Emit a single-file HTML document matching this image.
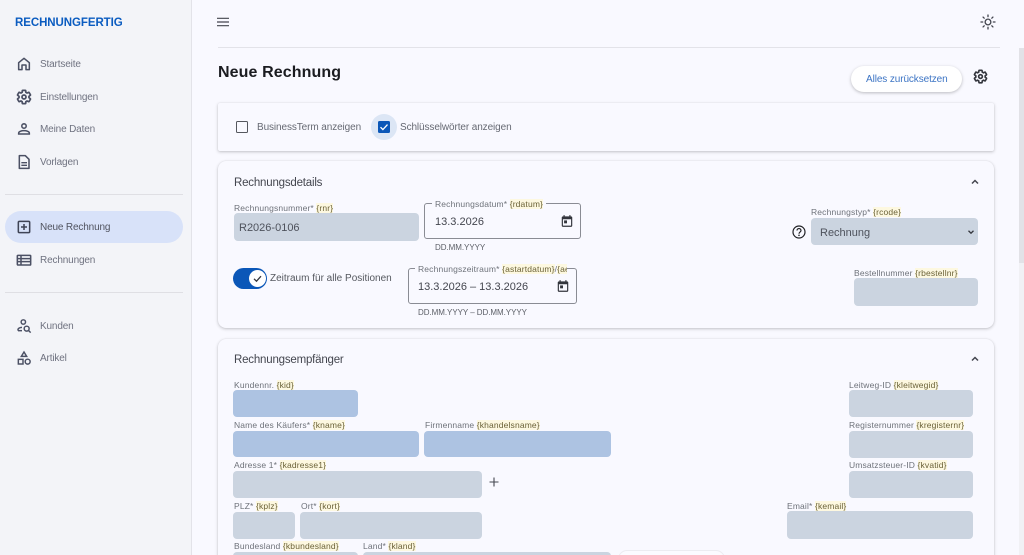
<!DOCTYPE html>
<html lang="de">
<head>
<meta charset="utf-8">
<title>Neue Rechnung</title>
<style>
html,body{margin:0;padding:0;width:1024px;height:555px;overflow:hidden;background:#f9f9ff;font-family:"Liberation Sans",sans-serif}
*{box-sizing:border-box}
#w{position:absolute;left:0;top:0;width:1024px;height:555px;overflow:hidden;background:#f9f9ff}
.a{position:absolute}
.t{position:absolute;white-space:nowrap;line-height:12px;height:12px}
.nav{font-size:10px;color:#6f7280;left:40px;letter-spacing:-.15px}
.lb{font-size:8.5px;color:#6e727a;letter-spacing:.15px}
.lb b{font-weight:400;background:#fdf8e0;color:#6b6238}
.in{position:absolute;background:#cbd4e0;border-radius:4px}
.bl{background:#adc3e2}
.card{position:absolute;left:218px;width:776px;background:#f9f9ff;box-shadow:0 1px 3px rgba(0,0,0,.22),0 0 1px rgba(0,0,0,.1)}
.h2{font-size:11.5px;color:#44464f;letter-spacing:-.2px}
.val{font-size:11px;color:#4e525c}
.out{position:absolute;border:1px solid #8a8c94;border-radius:3px}
.hlp{font-size:8px;color:#5d6068;letter-spacing:-.05px}
svg{position:absolute;overflow:visible}
</style>
</head>
<body>
<div id="w">
<svg width="0" height="0" style="position:absolute">
<symbol id="gear" viewBox="0 0 24 24"><path fill="none" stroke="currentColor" stroke-width="2.600" d="M19.43 12.98c.04-.32.07-.64.07-.98 0-.34-.03-.66-.07-.98l2.11-1.65c.19-.15.24-.42.12-.64l-2-3.46c-.12-.22-.39-.3-.61-.22l-2.49 1c-.52-.4-1.08-.73-1.69-.98l-.38-2.65C14.46 2.18 14.25 2 14 2h-4c-.25 0-.46.18-.49.42l-.38 2.65c-.61.25-1.17.59-1.69.98l-2.49-1c-.23-.09-.49 0-.61.22l-2 3.46c-.13.22-.07.49.12.64l2.11 1.65c-.04.32-.07.65-.07.98 0 .33.03.66.07.98l-2.11 1.65c-.19.15-.24.42-.12.64l2 3.46c.12.22.39.3.61.22l2.49-1c.52.4 1.08.73 1.69.98l.38 2.65c.03.24.24.42.49.42h4c.25 0 .46-.18.49-.42l.38-2.65c.61-.25 1.17-.59 1.69-.98l2.49 1c.23.09.49 0 .61-.22l2-3.46c.12-.22.07-.49-.12-.64z"/><circle cx="12" cy="12" r="3" fill="none" stroke="currentColor" stroke-width="2.600"/></symbol>
<symbol id="cal" viewBox="0 0 24 24"><path fill="currentColor" d="M19 4h-1V2h-2v2H8V2H6v2H5c-1.100 0-2 .9-2 2v14c0 1.100.9 2 2 2h14c1.100 0 2-.9 2-2V6c0-1.100-.9-2-2-2zm0 16H5V9h14v11z"/><rect x="7" y="11" width="5" height="5" fill="currentColor"/></symbol>
<symbol id="chev" viewBox="0 0 24 24"><path fill="none" stroke="currentColor" stroke-width="3" d="M6 15l6-6 6 6"/></symbol>
</svg>

<!-- sidebar -->
<div class="a" style="left:0;top:0;width:192px;height:555px;background:#f3f4f8;border-right:1px solid #e3e3e9"></div>
<div class="t" style="left:15px;top:17px;font-size:11.5px;font-weight:700;color:#0b5cc0;letter-spacing:-.07px">RECHNUNGFERTIG</div>
<div class="a" style="left:5px;top:211px;width:178px;height:32px;background:#d8e2f9;border-radius:16px"></div>
<div class="a" style="left:5px;top:194px;width:178px;height:1px;background:#dfdfe4"></div>
<div class="a" style="left:5px;top:292px;width:178px;height:1px;background:#dfdfe4"></div>

<div class="t nav" style="top:59px">Startseite</div>
<div class="t nav" style="top:92px">Einstellungen</div>
<div class="t nav" style="top:124px">Meine Daten</div>
<div class="t nav" style="top:157px">Vorlagen</div>
<div class="t nav" style="top:222px;color:#50535f">Neue Rechnung</div>
<div class="t nav" style="top:255px">Rechnungen</div>
<div class="t nav" style="top:321px">Kunden</div>
<div class="t nav" style="top:353px">Artikel</div>

<svg style="left:16px;top:56px;color:#4b5064" width="16" height="16" viewBox="0 0 24 24"><path fill="none" stroke="currentColor" stroke-width="2.300" stroke-linejoin="round" d="M4 20.500V10l8-6.500 8 6.500v10.500h-5v-7H9v7z"/></svg>
<svg style="left:16px;top:89px;color:#4b5064" width="16" height="16"><use href="#gear" width="16" height="16"/></svg>
<svg style="left:16px;top:121px;color:#4b5064" width="16" height="16" viewBox="0 0 24 24"><circle cx="12" cy="7.500" r="3.300" fill="none" stroke="currentColor" stroke-width="2.300"/><path fill="none" stroke="currentColor" stroke-width="2.300" d="M4 19.500v-1.500c0-2.200 4-3.500 8-3.500s8 1.300 8 3.500v1.500z"/></svg>
<svg style="left:16px;top:154px;color:#4b5064" width="16" height="16" viewBox="0 0 24 24"><path fill="none" stroke="currentColor" stroke-width="2.300" stroke-linejoin="round" d="M5 2.500h9l5.500 5.500v13.500H5z"/><path fill="none" stroke="currentColor" stroke-width="2" d="M8 13h8.500M8 17h8.500"/></svg>
<svg style="left:16px;top:219px;color:#3f4456" width="16" height="16" viewBox="0 0 24 24"><rect x="3.500" y="3.500" width="17" height="17" rx="1.500" fill="none" stroke="currentColor" stroke-width="2.300"/><path fill="none" stroke="currentColor" stroke-width="2.300" d="M12 7.500v9M7.500 12h9"/></svg>
<svg style="left:16px;top:252px;color:#4b5064" width="16" height="16" viewBox="0 0 24 24"><rect x="2" y="5" width="20" height="14.500" rx="1" fill="none" stroke="currentColor" stroke-width="2.300"/><path fill="none" stroke="currentColor" stroke-width="2.300" d="M2 10h20M2 14.500h20M7.500 5v14.500"/></svg>
<svg style="left:16px;top:318px;color:#4b5064" width="16" height="16" viewBox="0 0 24 24"><circle cx="11" cy="6" r="3.300" fill="none" stroke="currentColor" stroke-width="2.200"/><path fill="none" stroke="currentColor" stroke-width="2.200" d="M3 19v-1.500c0-2 3-3.500 6-3.500"/><path fill="none" stroke="currentColor" stroke-width="2.200" d="M3 19h6"/><circle cx="16" cy="16" r="3.700" fill="none" stroke="currentColor" stroke-width="2.200"/><path fill="none" stroke="currentColor" stroke-width="2.200" d="M19 19l3 3"/></svg>
<svg style="left:16px;top:350px;color:#4b5064" width="16" height="16" viewBox="0 0 24 24"><path fill="none" stroke="currentColor" stroke-width="2.200" d="M12 3l4 6.500H8z"/><rect x="3.500" y="14" width="7" height="7" fill="none" stroke="currentColor" stroke-width="2.200"/><circle cx="17.500" cy="17.500" r="3.700" fill="none" stroke="currentColor" stroke-width="2.200"/></svg>

<!-- top bar -->
<svg style="left:215px;top:14px;color:#44464f" width="16" height="16" viewBox="0 0 24 24"><path fill="none" stroke="currentColor" stroke-width="1.800" d="M3 6.500h18M3 12h18M3 17.500h18"/></svg>
<svg style="left:980px;top:14px;color:#44464f" width="16" height="16" viewBox="0 0 24 24"><circle cx="12" cy="12" r="4.300" fill="none" stroke="currentColor" stroke-width="2"/><path fill="none" stroke="currentColor" stroke-width="2" stroke-linecap="round" d="M12 1.500v2.500M12 20v2.500M1.500 12H4M20 12h2.500M4.600 4.600l1.700 1.700M17.700 17.700l1.700 1.700M4.600 19.400l1.700-1.700M17.700 6.300l1.700-1.700"/></svg>
<div class="a" style="left:218px;top:47px;width:782px;height:1px;background:#e3e3e9"></div>
<div class="a" style="left:1019px;top:48px;width:5px;height:507px;background:#f1f1f5"></div>
<div class="a" style="left:1019px;top:48px;width:5px;height:215px;background:#e2e2e7"></div>

<div class="t" style="left:218px;top:65px;height:16px;line-height:16px;font-size:16px;font-weight:700;color:#1b1c20;letter-spacing:.1px">Neue Rechnung</div>
<div class="a" style="left:851px;top:66px;width:111px;height:26px;background:#fff;border-radius:13px;box-shadow:0 1px 3px rgba(0,0,0,.25)"></div>
<div class="t" style="left:866px;top:74px;font-size:10px;color:#3c74c4;letter-spacing:-.1px">Alles zurücksetzen</div>
<svg style="left:973px;top:69px;color:#33353c" width="15" height="15"><use href="#gear" width="15" height="15"/></svg>

<!-- checkbox card -->
<div class="card" style="top:103px;height:48px;border-radius:2px"></div>
<div class="a" style="left:236px;top:121px;width:12px;height:12px;border:1.500px solid #55575e;border-radius:1.500px"></div>
<div class="t" style="left:257px;top:122px;font-size:10px;color:#666973;letter-spacing:-.1px">BusinessTerm anzeigen</div>
<div class="a" style="left:371px;top:114px;width:26px;height:26px;border-radius:50%;background:#dce6f5"></div>
<div class="a" style="left:378px;top:121px;width:12px;height:12px;background:#0b57b8;border-radius:1.500px"></div>
<svg style="left:378px;top:121px" width="12" height="12" viewBox="0 0 12 12"><path fill="none" stroke="#fff" stroke-width="1.300" d="M2.500 6.200l2.400 2.400 4.600-5"/></svg>
<div class="t" style="left:400px;top:122px;font-size:10px;color:#666973;letter-spacing:-.1px">Schlüsselwörter anzeigen</div>

<!-- Rechnungsdetails -->
<div class="card" style="top:161px;height:167px;border-radius:8px"></div>
<div class="t h2" style="left:234px;top:177px">Rechnungsdetails</div>
<svg style="left:969px;top:176px;color:#44464f" width="12" height="12"><use href="#chev" width="12" height="12"/></svg>

<div class="t lb" style="left:234px;top:202px">Rechnungsnummer* <b>{rnr}</b></div>
<div class="in" style="left:234px;top:213px;width:185px;height:28px"></div>
<div class="t val" style="left:239px;top:222px">R2026-0106</div>

<div class="out" style="left:424px;top:203px;width:157px;height:36px"></div>
<div class="t lb" style="left:432px;top:198px;padding:0 3px;background:#f9f9ff">Rechnungsdatum* <b>{rdatum}</b></div>
<div class="t val" style="left:435px;top:216px;color:#44464f">13.3.2026</div>
<svg style="left:560px;top:214px;color:#33353c" width="14" height="14"><use href="#cal" width="14" height="14"/></svg>
<div class="t hlp" style="left:435px;top:242px">DD.MM.YYYY</div>

<div class="a" style="left:233px;top:268px;width:34px;height:21px;border-radius:11px;background:#0b57b8"></div>
<div class="a" style="left:249px;top:270px;width:17px;height:17px;border-radius:50%;background:#fff"></div>
<svg style="left:249px;top:270px" width="17" height="17" viewBox="0 0 17 17"><path fill="none" stroke="#33353c" stroke-width="1.300" d="M5 8.800l2.500 2.400 4.500-5"/></svg>
<div class="t" style="left:270px;top:273px;font-size:10px;color:#55585f">Zeitraum für alle Positionen</div>

<div class="out" style="left:408px;top:268px;width:169px;height:36px"></div>
<div class="t lb" style="left:415px;top:263px;padding:0 3px;background:#f9f9ff;width:152px;overflow:hidden">Rechnungszeitraum* <b>{astartdatum}</b>/<b>{aendedatum}</b></div>
<div class="t val" style="left:418px;top:281px;color:#44464f">13.3.2026 – 13.3.2026</div>
<svg style="left:556px;top:279px;color:#33353c" width="14" height="14"><use href="#cal" width="14" height="14"/></svg>
<div class="t hlp" style="left:418px;top:307px">DD.MM.YYYY – DD.MM.YYYY</div>

<svg style="left:792px;top:225px;color:#1f2024" width="14" height="14" viewBox="0 0 14 14"><circle cx="7" cy="7" r="6" fill="none" stroke="currentColor" stroke-width="1.200"/><path fill="none" stroke="currentColor" stroke-width="1.200" d="M5 5.500c0-2.600 4-2.600 4 0 0 1.600-2 1.500-2 3.200"/><circle cx="7" cy="10.300" r=".8" fill="currentColor"/></svg>
<div class="t lb" style="left:811px;top:206px">Rechnungstyp* <b>{rcode}</b></div>
<div class="in" style="left:811px;top:218px;width:167px;height:27px"></div>
<div class="t val" style="left:820px;top:227px">Rechnung</div>
<svg style="left:966px;top:227px;color:#33353c;transform:rotate(180deg)" width="10" height="10"><use href="#chev" width="10" height="10"/></svg>
<div class="t lb" style="left:854px;top:267px">Bestellnummer <b>{rbestellnr}</b></div>
<div class="in" style="left:854px;top:278px;width:124px;height:28px"></div>

<!-- Rechnungsempfänger -->
<div class="card" style="top:339px;height:230px;border-radius:8px"></div>
<div class="t h2" style="left:234px;top:354px">Rechnungsempfänger</div>
<svg style="left:969px;top:353px;color:#44464f" width="12" height="12"><use href="#chev" width="12" height="12"/></svg>

<div class="t lb" style="left:234px;top:379px">Kundennr. <b>{kid}</b></div>
<div class="in bl" style="left:233px;top:390px;width:125px;height:27px"></div>
<div class="t lb" style="left:234px;top:419px">Name des Käufers* <b>{kname}</b></div>
<div class="in bl" style="left:233px;top:431px;width:186px;height:26px"></div>
<div class="t lb" style="left:425px;top:419px">Firmenname <b>{khandelsname}</b></div>
<div class="in bl" style="left:424px;top:431px;width:187px;height:26px"></div>
<div class="t lb" style="left:234px;top:459px">Adresse 1* <b>{kadresse1}</b></div>
<div class="in" style="left:233px;top:471px;width:249px;height:27px"></div>
<svg style="left:489px;top:477px;color:#44464f" width="10" height="10" viewBox="0 0 10 10"><path fill="none" stroke="currentColor" stroke-width="1.100" d="M5 .5v9M.5 5h9"/></svg>
<div class="t lb" style="left:234px;top:500px">PLZ* <b>{kplz}</b></div>
<div class="in" style="left:233px;top:512px;width:62px;height:27px"></div>
<div class="t lb" style="left:301px;top:500px">Ort* <b>{kort}</b></div>
<div class="in" style="left:300px;top:512px;width:182px;height:27px"></div>
<div class="t lb" style="left:234px;top:540px">Bundesland <b>{kbundesland}</b></div>
<div class="in" style="left:233px;top:552px;width:125px;height:10px"></div>
<div class="t lb" style="left:363px;top:540px">Land* <b>{kland}</b></div>
<div class="in" style="left:363px;top:552px;width:248px;height:10px"></div>
<div class="a" style="left:618px;top:550px;width:107px;height:20px;background:#fbfbff;border:1px solid #ececf1;border-radius:9px"></div>

<div class="t lb" style="left:849px;top:379px">Leitweg-ID <b>{kleitwegid}</b></div>
<div class="in" style="left:849px;top:390px;width:124px;height:27px"></div>
<div class="t lb" style="left:849px;top:419px">Registernummer <b>{kregisternr}</b></div>
<div class="in" style="left:849px;top:431px;width:124px;height:27px"></div>
<div class="t lb" style="left:849px;top:459px">Umsatzsteuer-ID <b>{kvatid}</b></div>
<div class="in" style="left:849px;top:471px;width:124px;height:27px"></div>
<div class="t lb" style="left:787px;top:500px">Email* <b>{kemail}</b></div>
<div class="in" style="left:787px;top:511px;width:186px;height:28px"></div>
</div>
</body>
</html>
